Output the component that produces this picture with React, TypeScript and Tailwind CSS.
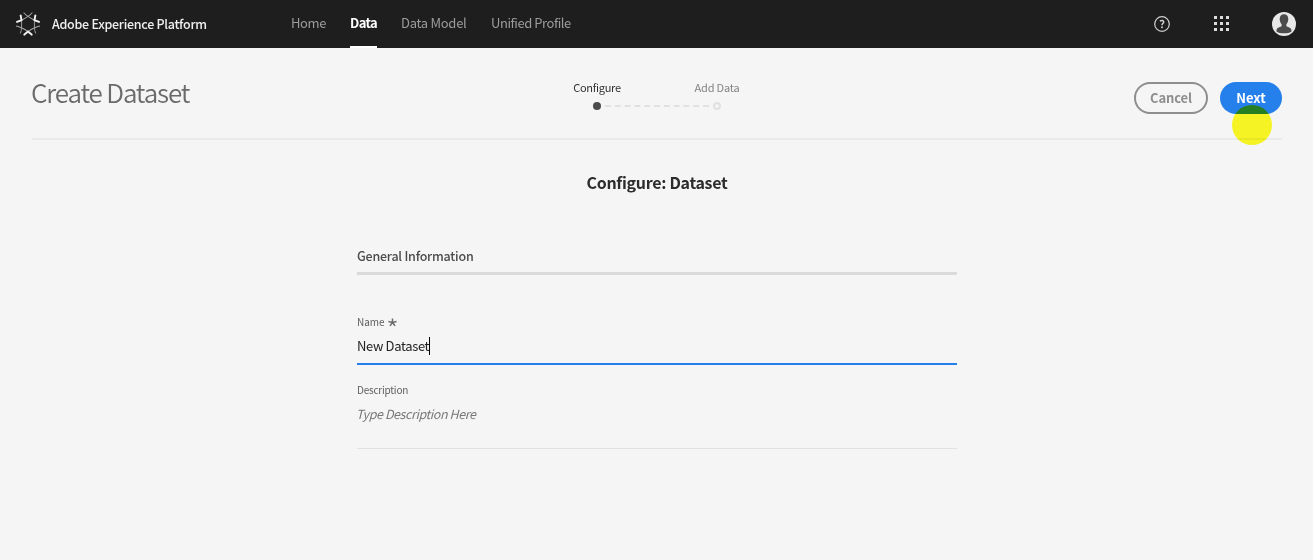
const navItems = [
  { label: 'Home', box: 'w-[35px] tracking-[-0.4px]', active: false },
  { label: 'Data', box: 'w-[27px] tracking-[-0.6px]', active: true },
  { label: 'Data Model', box: 'w-[66px] tracking-[-0.28px]', active: false },
  { label: 'Unified Profile', box: 'w-[80px] tracking-[-0.45px]', active: false },
];

const arc = 'M19.700 2.500Q18.600 5.200 18.500 8.200Q18.200 12 18.500 15.800Q18.600 18.800 19.700 21.500';
const chevron = 'M7.800 23L12 19.500L16.200 23';

function Logo() {
  return (
    <svg width="24" height="24" viewBox="0 0 24 24" fill="none">
      {[0, 60, 120, 180, 240, 300].map((angle) => (
        <path key={angle} d={arc} stroke="#a8a8a8" strokeWidth=".9" transform={`rotate(${angle} 12 12)`} />
      ))}
      {[0, 120, 240].map((angle) => (
        <path key={angle} d={chevron} stroke="#f0f0f0" strokeWidth="1.900" transform={`rotate(${angle} 12 12)`} />
      ))}
    </svg>
  );
}

function Help() {
  return (
    <svg width="16" height="16" viewBox="0 0 16 16" fill="none" stroke="#d0d0d0">
      <circle cx="8" cy="8" r="7.300" strokeWidth="1.200" />
      <path strokeWidth="1.500" d="M5.900 5C7.500 4.200 9.700 4.300 9.700 6C9.700 7.300 8 7.400 8 9.300" />
      <circle cx="8" cy="11.200" r=".95" fill="#d0d0d0" stroke="none" />
    </svg>
  );
}

function Avatar() {
  return (
    <svg width="24" height="24" viewBox="0 0 24 24">
      <circle cx="12" cy="12" r="12" fill="#e8e8e8" />
      <path
        fill="#4b4b4b"
        d="M12 2.300C14.700 2.300 16.300 4.200 16.300 7C16.300 9.300 15.500 11 14.400 12.200V14.100C15 15.200 19.500 15.400 19.500 18.600V19.500C17.500 21.300 14.900 21.300 12 21.300S6.500 21.300 4.500 19.500V18.600C4.500 15.400 9 15.200 9.600 14.100V12.200C8.500 11 7.700 9.300 7.700 7C7.700 4.200 9.300 2.300 12 2.300Z"
      />
    </svg>
  );
}

function Header() {
  return (
    <header className="flex h-12 items-center bg-[#1e1e1e] pl-4 pr-[17px]">
      <Logo />
      <span className="ml-3 w-[239px] text-[12.5px] font-medium leading-5 tracking-[-0.28px] text-[#f0f0f0]">
        Adobe Experience Platform
      </span>
      <nav className="flex h-full gap-6 text-[13px] leading-[46px]">
        {navItems.map((item) => (
          <a
            key={item.label}
            className={`${item.box} h-full border-b-2 ${
              item.active ? 'border-white font-bold text-white' : 'border-transparent text-[#9c9c9c]'
            }`}
          >
            {item.label}
          </a>
        ))}
      </nav>
      <div className="ml-auto flex items-center">
        <Help />
        <div className="mb-px ml-11 mr-[43px] grid grid-cols-3 gap-[3px]">
          {Array.from({ length: 9 }, (_, i) => (
            <i key={i} className="size-[3px] bg-[#dcdcdc]" />
          ))}
        </div>
        <Avatar />
      </div>
    </header>
  );
}

function Steps() {
  return (
    <div className="absolute left-[564px] top-[31px] w-[186px]">
      <div className="flex justify-between text-[11px] leading-4">
        <span className="w-[66px] text-center tracking-[-0.3px] text-[#323232]">Configure</span>
        <span className="w-[66px] text-center tracking-[-0.2px] text-[#848484]">Add Data</span>
      </div>
      <svg className="mt-[6px]" width="186" height="10" viewBox="0 0 186 10">
        <circle cx="33" cy="5" r="4" fill="#4b4b4b" />
        <path d="M41 5H145" stroke="#e1e1e1" strokeWidth="2" strokeDasharray="6 3.800" />
        <circle cx="153" cy="5" r="3" fill="#f5f5f5" stroke="#e1e1e1" strokeWidth="2" />
      </svg>
    </div>
  );
}

export default function App() {
  return (
    <div className="h-[560px] w-[1313px] overflow-hidden whitespace-nowrap bg-[#f5f5f5] font-['Noto_Sans_CJK_SC','Noto_Sans',sans-serif]">
      <Header />
      <main className="px-8">
        <div className="relative -mx-8 px-8">
          <div className="flex h-[92px] w-[1250px] justify-between border-b-2 border-[#eaeaea]">
            <h1 className="-ml-px pt-6 text-[26px] font-[350] leading-10 tracking-[-1.15px] text-[#6a6a6a]">Create Dataset</h1>
            <div className="flex gap-3 pt-[34px] text-[13px] font-bold leading-7">
              <button className="h-8 w-[74px] rounded-full border-2 border-[#8e8e8e] tracking-[-0.1px] text-[#8e8e8e]">Cancel</button>
              <button className="h-8 w-[62px] rounded-full bg-[#2680eb] text-white">Next</button>
            </div>
          </div>
          <Steps />
          <div className="absolute left-[1232px] top-[57px] size-10 rounded-full bg-[#fffd25] mix-blend-multiply" />
        </div>
        <h2 className="mt-[30px] w-[1250px] text-center text-[16px] font-bold leading-6 tracking-[-0.3px] text-[#2c2c2c]">Configure: Dataset</h2>
        <form className="ml-[325px] w-[600px]">
          <h3 className="mt-[52px] h-[29px] border-b-[3px] border-[#dadada] text-[12.5px] font-medium leading-5 tracking-[-0.22px] text-[#4b4b4b]">
            General Information
          </h3>
          <div className="mt-[39px] flex h-[17px] items-start text-[10px] leading-4 text-[#606060]">
            <span className="w-[31px]">Name</span>
            <svg className="mt-1" width="9" height="9" viewBox="0 0 10 10" stroke="#6e6e6e" strokeWidth="1.700">
              <path d="M5 5V.5M5 5L.5 3.800M5 5L9.500 3.800M5 5L2.200 8.800M5 5L7.800 8.800" />
            </svg>
          </div>
          <div className="flex h-[34px] items-start border-b-2 border-[#2680eb] pt-[5px] text-[13px] leading-5 text-[#222222]">
            <span className="w-[72px] tracking-[-0.35px]">New Dataset</span>
            <i className="mt-px h-[18px] w-px bg-black" />
          </div>
          <div className="mt-[17px] h-4 text-[10px] leading-4 tracking-[-0.22px] text-[#606060]">Description</div>
          <div className="-ml-px h-[51px] pt-[6px] text-[12.5px] italic leading-5 tracking-[-0.42px] text-[#787878]">Type Description Here</div>
          <div className="-mt-px h-px bg-[#e1e1e1]" />
        </form>
      </main>
    </div>
  );
}
